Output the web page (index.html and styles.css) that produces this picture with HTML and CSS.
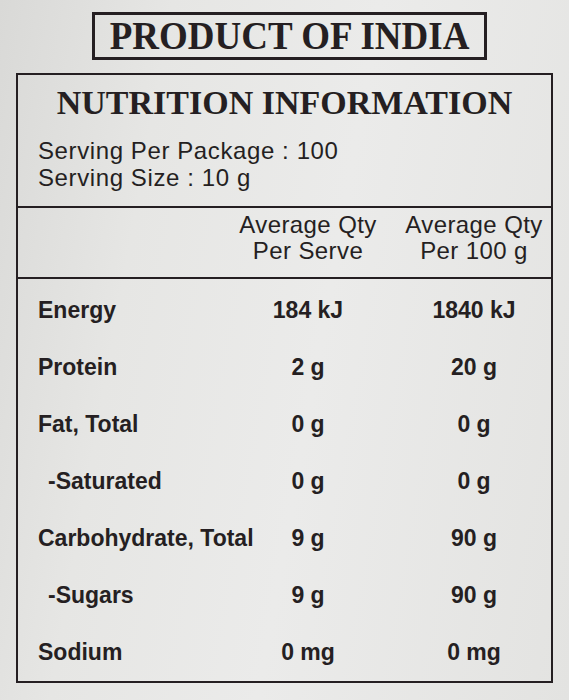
FILE: index.html
```html
<!DOCTYPE html>
<html>
<head>
    <title>Nutrition Information</title>
    <link rel="stylesheet" href="styles.css">
</head>
<body>
    <div class="origin"><span>PRODUCT OF INDIA</span></div>

    <div class="panel">
        <h1 class="panel-title">NUTRITION INFORMATION</h1>
        <div class="serving">
            <p>Serving Per Package : 100</p>
            <p>Serving Size : 10 g</p>
        </div>

        <div class="head-row">
            <div class="label"></div>
            <div class="val">Average Qty<br>Per Serve</div>
            <div class="val">Average Qty<br>Per 100 g</div>
        </div>

        <div class="rows">
            <div class="row">
                <div class="label">Energy</div>
                <div class="val">184 kJ</div>
                <div class="val">1840 kJ</div>
            </div>
            <div class="row">
                <div class="label">Protein</div>
                <div class="val">2 g</div>
                <div class="val">20 g</div>
            </div>
            <div class="row">
                <div class="label">Fat, Total</div>
                <div class="val">0 g</div>
                <div class="val">0 g</div>
            </div>
            <div class="row">
                <div class="label sub">-Saturated</div>
                <div class="val">0 g</div>
                <div class="val">0 g</div>
            </div>
            <div class="row">
                <div class="label">Carbohydrate, Total</div>
                <div class="val">9 g</div>
                <div class="val">90 g</div>
            </div>
            <div class="row">
                <div class="label sub">-Sugars</div>
                <div class="val">9 g</div>
                <div class="val">90 g</div>
            </div>
            <div class="row">
                <div class="label">Sodium</div>
                <div class="val">0 mg</div>
                <div class="val">0 mg</div>
            </div>
        </div>
    </div>
</body>
</html>
```

FILE: styles.css
```css
body {
    margin: 0;
    padding: 12px 0 0 0;
    font-family: "Liberation Sans", Arial, sans-serif;
    color: #251f22;
    background: linear-gradient(100deg, #d9d9d7 0%, #e6e6e4 25%, #ebebea 55%, #e3e3e1 100%);
    min-height: 700px;
    box-sizing: border-box;
}

.origin {
    width: 389px;
    height: 42px;
    margin-left: 92px;
    border: 3px solid #251f22;
    font-family: "Liberation Serif", "Times New Roman", serif;
    font-weight: bold;
    font-size: 37px;
    line-height: 42px;
    text-align: center;
}

.origin span {
    display: inline-block;
    transform: scaleY(1.08);
}

.panel {
    width: 533px;
    margin: 13px 0 0 16px;
    border: 2px solid #251f22;
}

.panel-title {
    margin: 0;
    padding-top: 8px;
    font-family: "Liberation Serif", "Times New Roman", serif;
    font-weight: bold;
    font-size: 34px;
    line-height: 40px;
    text-align: center;
}

.serving {
    padding: 14px 0 15px 20px;
    border-bottom: 2px solid #251f22;
}

.serving p {
    margin: 0;
    font-size: 24px;
    line-height: 27px;
    letter-spacing: 0.6px;
}

.head-row {
    display: flex;
    padding: 4px 0 13px 20px;
    border-bottom: 2px solid #251f22;
    font-size: 24px;
    line-height: 26px;
    letter-spacing: 0.4px;
}

.label {
    width: 200px;
    white-space: nowrap;
}

.val {
    width: 140px;
    text-align: center;
    white-space: nowrap;
}

.val + .val {
    margin-left: 26px;
}

.rows {
    padding-top: 3px;
}

.row {
    display: flex;
    align-items: center;
    height: 57px;
    padding-left: 20px;
    font-size: 23px;
    font-weight: bold;
}

.label.sub {
    padding-left: 10px;
    width: 190px;
}
```
